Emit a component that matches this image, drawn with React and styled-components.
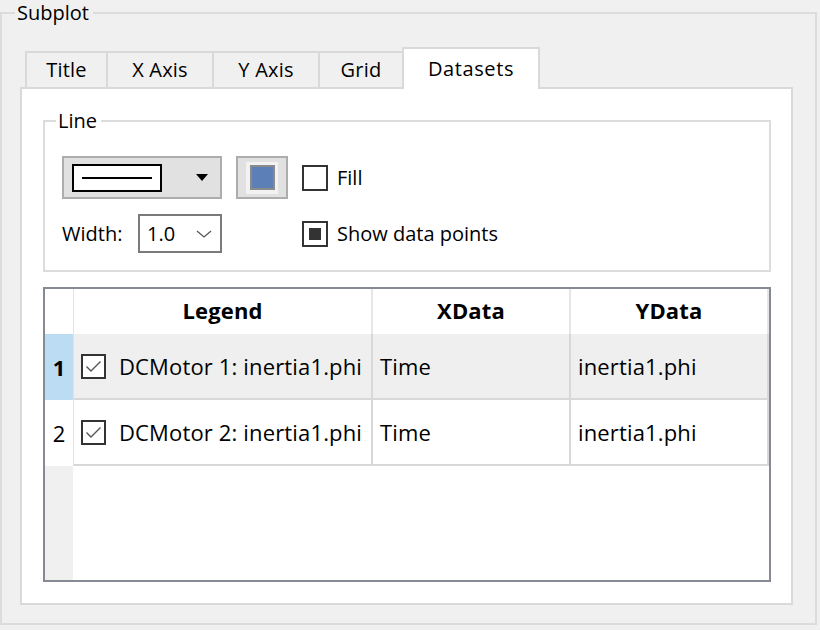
import styled, { createGlobalStyle } from "styled-components";

const GlobalStyle = createGlobalStyle`
  html, body {
    margin: 0;
    padding: 0;
    background: #f0f0f0;
  }
  body {
    font-family: "Open Sans", "Liberation Sans", sans-serif;
    font-size: 20px;
    color: #000;
  }
  * {
    box-sizing: border-box;
  }
`;

const Window = styled.div`
  width: 820px;
  height: 630px;
  overflow: hidden;
`;

const GroupBox = styled.fieldset`
  margin: 0;
  min-width: 0;
  border: 2px solid #dcdcdc;
  width: ${(p) => p.$w || "auto"};
  height: ${(p) => p.$h};
  padding: ${(p) => p.$pad};
`;

const GroupTitle = styled.legend`
  margin-left: ${(p) => p.$indent};
  padding: 0 4px 0 2px;
  line-height: 26px;
`;

const TabBar = styled.div`
  display: flex;
  align-items: flex-end;
  height: 40px;
  padding-left: 5px;
`;

const Tab = styled.div`
  position: relative;
  width: ${(p) => p.$w}px;
  height: ${(p) => (p.$active ? 42 : 36)}px;
  margin-left: -2px;
  margin-bottom: ${(p) => (p.$active ? -2 : 0)}px;
  z-index: ${(p) => (p.$active ? 1 : 0)};
  display: flex;
  align-items: center;
  justify-content: center;
  padding-bottom: 1px;
  border: 2px solid #d9d9d9;
  border-bottom: none;
  background: ${(p) => (p.$active ? "#fff" : "#f0f0f0")};
  letter-spacing: ${(p) => (p.$active ? "0.6px" : "0.2px")};
  &:first-child {
    margin-left: 0;
  }
`;

const TabPane = styled.div`
  height: 518px;
  background: #fff;
  border: 2px solid #d9d9d9;
  padding: 19px 20px 0 21px;
`;

const LineGrid = styled.div`
  display: grid;
  grid-template-columns: 160px 52px auto;
  grid-template-rows: 43px 39px;
  column-gap: 14px;
  row-gap: 15px;
  align-items: center;
`;

const StyleCombo = styled.div`
  height: 43px;
  display: flex;
  align-items: center;
  justify-content: space-between;
  padding: 0 12px 0 8px;
  background: #e1e1e1;
  border: 2px solid #adadad;
`;

const LinePreview = styled.div`
  width: 90px;
  height: 28px;
  border: 2px solid #000;
  background: #fff;
  display: flex;
  align-items: center;
  padding: 0 8px;
  &::after {
    content: "";
    flex: 1;
    height: 2px;
    background: #000;
  }
`;

const ColorButton = styled.div`
  height: 43px;
  display: flex;
  align-items: center;
  justify-content: center;
  background: #e1e1e1;
  border: 2px solid #adadad;
`;

const ColorWell = styled.div`
  width: 32px;
  height: 32px;
  display: flex;
  align-items: center;
  justify-content: center;
  background: #f2f2f2;
`;

const Swatch = styled.div`
  width: 25px;
  height: 25px;
  border: 2px solid #8a8a8a;
  background: ${(p) => p.$color};
`;

const CheckRow = styled.label`
  display: flex;
  align-items: center;
  gap: 9px;
  grid-column: 3;
`;

const Box = styled.span`
  width: 26px;
  height: 26px;
  border: 2px solid #333;
  background: #fff;
  display: flex;
  align-items: center;
  justify-content: center;
  flex-shrink: 0;
  &::after {
    content: "";
    width: 12px;
    height: 12px;
    background: ${(p) => (p.$filled ? "#333" : "transparent")};
  }
`;

const WidthField = styled.div`
  grid-column: 1;
  display: flex;
  align-items: center;
  justify-content: space-between;
`;

const SpinCombo = styled.div`
  width: 84px;
  height: 39px;
  border: 2px solid #7a7a7a;
  background: #fff;
  display: flex;
  align-items: center;
  justify-content: space-between;
  padding: 0 8px 0 7px;
`;

const Table = styled.div`
  margin-top: 15px;
  height: 295px;
  border: 2px solid #868a92;
  background: #fff;
  display: flex;
  flex-direction: column;
  font-size: 22px;
  letter-spacing: 0.15px;
`;

const TableRow = styled.div`
  display: grid;
  grid-template-columns: 29px 299px 198px 198px 1fr;
  height: ${(p) => (p.$header ? 45 : 66)}px;
  flex-shrink: 0;
`;

const RowHead = styled.div`
  display: flex;
  align-items: center;
  justify-content: center;
  border-right: 1px solid #e3e3e3;
  font-weight: ${(p) => (p.$current ? 700 : 400)};
  background: ${(p) => (p.$current ? "#bcdcf4" : "#fff")};
`;

const HeadCell = styled.div`
  display: flex;
  align-items: center;
  justify-content: center;
  padding-bottom: 3px;
  font-weight: 700;
  border-right: 2px solid #e6e6e6;
`;

const Cell = styled.div`
  display: flex;
  align-items: center;
  gap: 13px;
  padding-left: 7px;
  white-space: nowrap;
  overflow: hidden;
  background: ${(p) => (p.$current ? "#efefef" : "#fff")};
  border-right: 2px solid #d8d8d8;
  border-bottom: 2px solid #d8d8d8;
`;

const TickBox = styled.span`
  width: 25px;
  height: 25px;
  border: 2px solid #333;
  background: #fff;
  display: flex;
  align-items: center;
  justify-content: center;
  flex-shrink: 0;
`;

const Filler = styled.div`
  flex: 1;
  display: grid;
  grid-template-columns: 28px 1fr;
  &::before {
    content: "";
    background: #f0f0f0;
  }
`;

const tabs = [
  { label: "Title", w: 83 },
  { label: "X Axis", w: 108 },
  { label: "Y Axis", w: 108 },
  { label: "Grid", w: 86 },
  { label: "Datasets", w: 138, active: true },
];

const rows = [
  { n: 1, legend: "DCMotor 1: inertia1.phi", x: "Time", y: "inertia1.phi", current: true },
  { n: 2, legend: "DCMotor 2: inertia1.phi", x: "Time", y: "inertia1.phi" },
];

export default function App() {
  return (
    <Window>
      <GlobalStyle />
      <GroupBox $w="817px" $h="625px" $pad="21px 22px 18px 18px">
        <GroupTitle $indent="-5px">Subplot</GroupTitle>
        <TabBar>
          {tabs.map((t) => (
            <Tab key={t.label} $w={t.w} $active={t.active}>
              {t.label}
            </Tab>
          ))}
        </TabBar>
        <TabPane>
          <GroupBox $h="164px" $pad="22px 17px 0 17px">
            <GroupTitle $indent="-6px">Line</GroupTitle>
            <LineGrid>
              <StyleCombo>
                <LinePreview />
                <svg width="12" height="7" viewBox="0 0 12 7">
                  <polygon points="0,0 12,0 6,7" fill="#000" />
                </svg>
              </StyleCombo>
              <ColorButton>
                <ColorWell>
                  <Swatch $color="#5b7fb6" />
                </ColorWell>
              </ColorButton>
              <CheckRow>
                <Box />
                Fill
              </CheckRow>
              <WidthField>
                Width:
                <SpinCombo>
                  1.0
                  <svg width="16" height="8" viewBox="0 0 16 8">
                    <polyline points="1,1 8,7 15,1" fill="none" stroke="#555" strokeWidth="1.2" />
                  </svg>
                </SpinCombo>
              </WidthField>
              <CheckRow>
                <Box $filled />
                Show data points
              </CheckRow>
            </LineGrid>
          </GroupBox>
          <Table>
            <TableRow $header>
              <RowHead />
              <HeadCell>Legend</HeadCell>
              <HeadCell>XData</HeadCell>
              <HeadCell>YData</HeadCell>
              <div />
            </TableRow>
            {rows.map((r) => (
              <TableRow key={r.n}>
                <RowHead $current={r.current}>{r.n}</RowHead>
                <Cell $current={r.current}>
                  <TickBox>
                    <svg width="17" height="13" viewBox="0 0 17 13">
                      <polyline points="1.5,6.5 6,11 15.5,1.5" fill="none" stroke="#555" strokeWidth="1.4" />
                    </svg>
                  </TickBox>
                  {r.legend}
                </Cell>
                <Cell $current={r.current}>{r.x}</Cell>
                <Cell $current={r.current}>{r.y}</Cell>
                <div />
              </TableRow>
            ))}
            <Filler />
          </Table>
        </TabPane>
      </GroupBox>
    </Window>
  );
}
